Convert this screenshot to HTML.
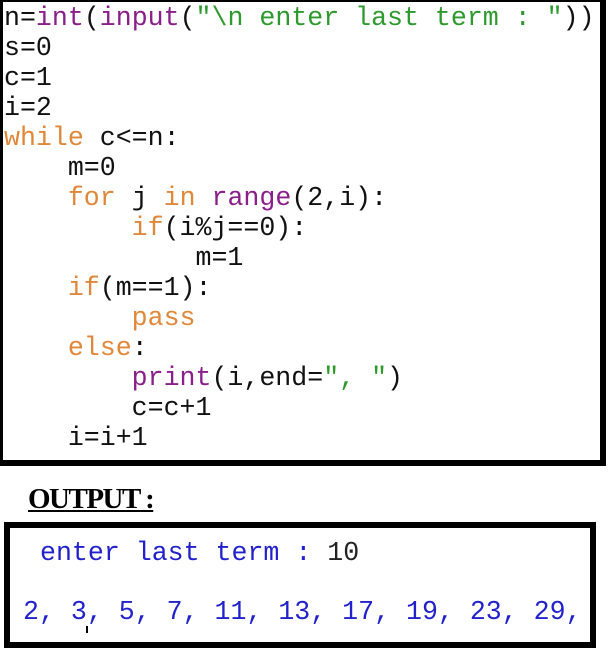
<!DOCTYPE html>
<html><head><meta charset="utf-8"><style>
body{margin:0;width:609px;height:659px;background:#fff;position:relative;overflow:hidden;font-family:"Liberation Mono",monospace;}
#code{position:absolute;left:0;top:0;width:597px;height:458px;border-top:2px solid #000;border-left:3px solid #000;border-right:6px solid #000;border-bottom:6px solid #000;}
pre{margin:0;position:absolute;left:4px;top:3px;font-family:"Liberation Mono",monospace;font-size:26.6px;line-height:30px;color:#111;}
.p{color:#8a1e8a}.g{color:#2e9a2e}.o{color:#e0883a}
#lbl{position:absolute;left:28px;top:482px;font-family:"Liberation Serif",serif;font-weight:bold;font-size:29px;letter-spacing:-1.5px;text-decoration:underline;color:#000;line-height:34px}
#out{position:absolute;left:4px;top:522px;width:580px;height:114px;border:6px solid #000;}
.l{position:absolute;font-family:"Liberation Mono",monospace;font-size:26.6px;line-height:30px;color:#2222cc;white-space:pre}
</style></head><body>
<div id="code"></div>
<pre>n=<span class="p">int</span>(<span class="p">input</span>(<span class="g">"\n enter last term : "</span>))
s=0
c=1
i=2
<span class="o">while</span> c&lt;=n:
    m=0
    <span class="o">for</span> j <span class="o">in</span> <span class="p">range</span>(2,i):
        <span class="o">if</span>(i%j==0):
            m=1
    <span class="o">if</span>(m==1):
        <span class="o">pass</span>
    <span class="o">else</span>:
        <span class="p">print</span>(i,end=<span class="g">", "</span>)
        c=c+1
    i=i+1</pre>
<div id="lbl">OUTPUT :</div>
<div id="out"></div>
<div class="l" style="left:40px;top:538px">enter last term : <span style="color:#222">10</span></div>
<div class="l" style="left:23px;top:597px">2, 3, 5, 7, 11, 13, 17, 19, 23, 29,</div>
<div style="position:absolute;left:86px;top:626px;width:2px;height:7px;background:#000"></div>
</body></html>
